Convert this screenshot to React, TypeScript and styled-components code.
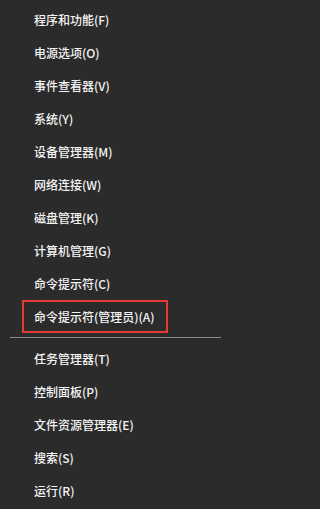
import styled, { createGlobalStyle } from "styled-components";

const GlobalStyle = createGlobalStyle`
    html, body {
        margin: 0;
        padding: 0;
        background: #2b2b2b;
    }
`;

const Menu = styled.nav`
    width: 229px;
    height: 509px;
    box-sizing: border-box;
    padding-top: 3px;
    background: #2b2b2b;
    display: flex;
    flex-direction: column;
    font-family: "Noto Sans CJK SC", "Noto Sans", sans-serif;
    font-size: 12px;
    font-weight: 500;
    color: #f4f4f4;
    overflow: hidden;
`;

const Item = styled.div<{ $marked?: boolean }>`
    display: flex;
    align-items: center;
    height: 33px;
    box-sizing: border-box;
    padding-left: 34px;
    white-space: nowrap;
    ${p => p.$marked && `
        width: fit-content;
        margin-left: 22px;
        padding: 0 11px 0 10px;
        border: 2px solid #e33a36;
    `}
`;

const Separator = styled.div`
    height: 9px;
    display: flex;
    align-items: center;
    padding: 0 8px 0 10px;
    &::after {
        content: "";
        flex: 1;
        height: 1px;
        background: #8a8a8a;
    }
`;

const topItems = [
    "程序和功能(F)",
    "电源选项(O)",
    "事件查看器(V)",
    "系统(Y)",
    "设备管理器(M)",
    "网络连接(W)",
    "磁盘管理(K)",
    "计算机管理(G)",
    "命令提示符(C)",
];

const bottomItems = [
    "任务管理器(T)",
    "控制面板(P)",
    "文件资源管理器(E)",
    "搜索(S)",
    "运行(R)",
];

export default function App() {
    return (
        <>
            <GlobalStyle/>
            <Menu>
                {topItems.map(label => <Item key={label}>{label}</Item>)}
                <Item $marked>命令提示符(管理员)(A)</Item>
                <Separator/>
                {bottomItems.map(label => <Item key={label}>{label}</Item>)}
            </Menu>
        </>
    );
}
